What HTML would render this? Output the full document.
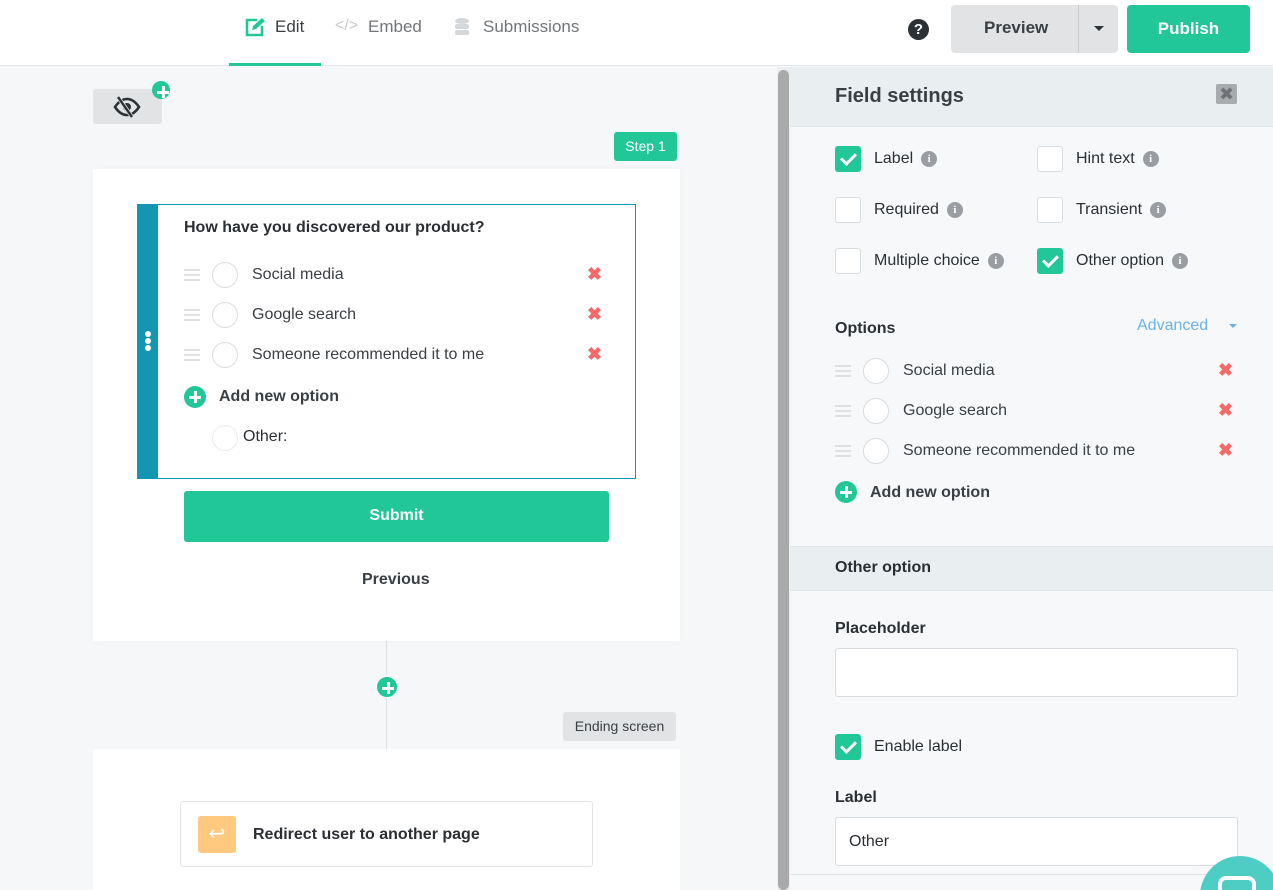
<!DOCTYPE html>
<html style="overflow:hidden;width:1273px;height:890px"><head><meta charset="utf-8"><style>
*{box-sizing:border-box;margin:0;padding:0}
body{width:1273px;height:890px;overflow:hidden;font-family:"Liberation Sans",sans-serif;color:#2b2f33;background:#f5f7f9;position:relative}
.a{position:absolute}
.t{font-size:16px;white-space:nowrap}
.b{font-weight:bold}
.cb{position:absolute;width:26px;height:26px;border:1px solid #d8dde1;border-radius:3px;background:#fff}
.cb.on{background:#22c797;border-color:#22c797}
.cb.on::after{content:"";position:absolute;left:8px;top:3px;width:6px;height:12px;border:solid #fff;border-width:0 3px 3px 0;transform:rotate(45deg)}
.info{display:inline-block;width:16px;height:16px;border-radius:50%;background:#9a9ea2;color:#fff;font-size:11px;font-weight:bold;text-align:center;line-height:16px;margin-left:8px;vertical-align:1px;font-family:"Liberation Serif",serif}
.rad{position:absolute;width:26px;height:26px;border-radius:50%;border:1px solid #d8dde1;background:#fff}
.drag{position:absolute;width:16px;height:12px;border-top:2px solid #dde1e4;border-bottom:2px solid #dde1e4}
.drag::after{content:"";position:absolute;left:0;right:0;top:3px;height:2px;background:#dde1e4}
.x{position:absolute;color:#f46a6a;font-size:18px;font-weight:bold}
.plus{position:absolute;width:22px;height:22px;border-radius:50%;background:#22c797}
.plus::before{content:"";position:absolute;left:5px;top:9.5px;width:12px;height:3px;background:#fff}
.plus::after{content:"";position:absolute;left:9.5px;top:5px;width:3px;height:12px;background:#fff}
</style></head><body>
<!-- header -->
<div class="a" style="left:0;top:0;width:1273px;height:66px;background:#fff;border-bottom:1px solid #e2e7ea"></div>
<div class="a" style="left:229px;top:63px;width:92px;height:3px;background:#22c797"></div>
<svg class="a" style="left:244px;top:17px" width="22" height="20" viewBox="0 0 22 20"><path d="M13 3H3v15h15V9" fill="none" stroke="#22c797" stroke-width="2.5"/><path d="M8 13l1-4 9-8 3 3-9 8z" fill="#22c797"/></svg>
<div class="a t" style="left:275px;top:17px;font-size:17px;color:#3a3f44">Edit</div>
<div class="a t" style="left:335px;top:17px;font-size:16px;color:#c7cacd">&lt;/&gt;</div>
<div class="a t" style="left:368px;top:17px;font-size:17px;color:#71767b">Embed</div>
<svg class="a" style="left:454px;top:17px" width="16" height="20" viewBox="0 0 16 20"><ellipse cx="8" cy="4" rx="7" ry="3" fill="#d5d8db"/><rect x="1" y="7" width="14" height="5" rx="2" fill="#d5d8db"/><rect x="1" y="13" width="14" height="5" rx="2" fill="#d5d8db"/></svg>
<div class="a t" style="left:483px;top:17px;font-size:17px;color:#71767b">Submissions</div>
<div class="a" style="left:908px;top:19px;width:21px;height:21px;border-radius:50%;background:#2b3135;color:#fff;font-weight:bold;font-size:15px;text-align:center;line-height:21px">?</div>
<div class="a" style="left:951px;top:5px;width:167px;height:48px;background:#e1e3e5;border-radius:4px"></div>
<div class="a" style="left:1078px;top:5px;width:1px;height:48px;background:#c9cccf"></div>
<div class="a t b" style="left:984px;top:18px;font-size:17px;color:#3a3f44">Preview</div>
<div class="a" style="left:1094px;top:26px;border:5px solid transparent;border-top-color:#2b3135;border-bottom:0"></div>
<div class="a" style="left:1127px;top:5px;width:123px;height:48px;background:#22c797;border-radius:4px;color:#fff;font-weight:bold;font-size:17px;text-align:center;line-height:47px">Publish</div>

<!-- canvas -->
<div class="a" style="left:93px;top:89px;width:69px;height:35px;background:#e1e3e5;border-radius:3px"></div>
<svg class="a" style="left:112px;top:94px" width="30" height="26" viewBox="0 0 30 26"><path d="M3 13c4-6 8-8 12-8s8 2 12 8c-4 6-8 8-12 8s-8-2-12-8z" fill="none" stroke="#2b3135" stroke-width="2.6"/><circle cx="15" cy="13" r="4" fill="#2b3135"/><path d="M6 3l14 20" stroke="#e1e3e5" stroke-width="4"/><path d="M6 3l14 20" stroke="#2b3135" stroke-width="2.4"/></svg>
<div class="plus" style="left:152px;top:81px;width:18px;height:18px"></div>
<div class="a" style="left:614px;top:132px;width:63px;height:29px;background:#22c797;border-radius:3px;color:#fff;font-size:14px;text-align:center;line-height:29px">Step 1</div>
<div class="a" style="left:93px;top:169px;width:587px;height:472px;background:#fff;box-shadow:0 0 8px rgba(0,0,0,.03)"></div>
<div class="a" style="left:137px;top:204px;width:499px;height:275px;border:1px solid #1396b1"></div>
<div class="a" style="left:137px;top:204px;width:21px;height:275px;background:#1396b1"></div>
<div class="a" style="left:145px;top:331px;width:6px;height:6px;border-radius:50%;background:#fff;box-shadow:0 7px 0 #fff,0 14px 0 #fff"></div>
<div class="a t b" style="left:184px;top:219px;font-size:16px">How have you discovered our product?</div>
<div class="drag" style="left:184px;top:269px"></div><div class="rad" style="left:212px;top:262px"></div><div class="a t" style="left:252px;top:266px;color:#3a3f44">Social media</div><div class="x" style="left:587px;top:264px">✖</div>
<div class="drag" style="left:184px;top:309px"></div><div class="rad" style="left:212px;top:302px"></div><div class="a t" style="left:252px;top:306px;color:#3a3f44">Google search</div><div class="x" style="left:587px;top:304px">✖</div>
<div class="drag" style="left:184px;top:349px"></div><div class="rad" style="left:212px;top:342px"></div><div class="a t" style="left:252px;top:346px;color:#3a3f44">Someone recommended it to me</div><div class="x" style="left:587px;top:344px">✖</div>
<div class="plus" style="left:184px;top:386px"></div><div class="a t b" style="left:219px;top:388px;color:#3a3f44">Add new option</div>
<div class="rad" style="left:212px;top:425px;border-color:#e8ebed"></div><div class="a t" style="left:243px;top:428px">Other:</div>
<div class="a" style="left:184px;top:491px;width:425px;height:51px;background:#22c797;border-radius:3px;color:#fff;font-weight:bold;font-size:16px;text-align:center;line-height:49px">Submit</div>
<div class="a t b" style="left:362px;top:571px;color:#3a3f44">Previous</div>
<div class="a" style="left:386px;top:641px;width:1px;height:108px;background:#dde1e4"></div>
<div class="plus" style="left:375px;top:675px;width:24px;height:24px;border:2px solid #f5f7f9"></div>
<div class="a" style="left:563px;top:712px;width:113px;height:29px;background:#e1e3e5;border-radius:3px;color:#3a3f44;font-size:14px;text-align:center;line-height:29px">Ending screen</div>
<div class="a" style="left:93px;top:749px;width:587px;height:141px;background:#fff"></div>
<div class="a" style="left:180px;top:801px;width:413px;height:66px;border:1px solid #e2e5e8;border-radius:3px"></div>
<div class="a" style="left:198px;top:816px;width:38px;height:37px;background:#ffca80;border-radius:3px;color:#fff;font-size:20px;text-align:center;line-height:37px">↩</div>
<div class="a t b" style="left:253px;top:826px">Redirect user to another page</div>

<!-- scrollbar -->
<div class="a" style="left:777px;top:67px;width:13px;height:823px;background:#eceef0"></div>
<div class="a" style="left:778px;top:70px;width:11px;height:820px;background:#a9a9a9;border-radius:6px"></div>

<!-- right panel -->
<div class="a" style="left:790px;top:67px;width:483px;height:823px;background:#f6f8fa"></div>
<div class="a" style="left:790px;top:67px;width:483px;height:60px;background:#e9eef1;border-bottom:1px solid #e0e5e8"></div>
<div class="a t b" style="left:835px;top:85px;font-size:20px;color:#3a3f44">Field settings</div>
<div class="a" style="left:1216px;top:84px;width:21px;height:20px;background:#a9acaf;border-radius:2px;color:#6f7377;font-size:18px;text-align:center;line-height:20px">✖</div>
<div class="cb on" style="left:835px;top:146px"></div><div class="a t" style="left:874px;top:150px">Label<span class="info">i</span></div>
<div class="cb" style="left:1037px;top:146px"></div><div class="a t" style="left:1076px;top:150px">Hint text<span class="info">i</span></div>
<div class="cb" style="left:835px;top:197px"></div><div class="a t" style="left:874px;top:201px">Required<span class="info">i</span></div>
<div class="cb" style="left:1037px;top:197px"></div><div class="a t" style="left:1076px;top:201px">Transient<span class="info">i</span></div>
<div class="cb" style="left:835px;top:248px"></div><div class="a t" style="left:874px;top:252px">Multiple choice<span class="info">i</span></div>
<div class="cb on" style="left:1037px;top:248px"></div><div class="a t" style="left:1076px;top:252px">Other option<span class="info">i</span></div>
<div class="a t b" style="left:835px;top:320px">Options</div>
<div class="a t" style="left:1137px;top:317px;color:#6cb2e4">Advanced</div>
<div class="a" style="left:1229px;top:324px;border:4px solid transparent;border-top-color:#6cb2e4;border-bottom:0"></div>
<div class="drag" style="left:835px;top:365px"></div><div class="rad" style="left:863px;top:358px"></div><div class="a t" style="left:903px;top:362px;color:#3a3f44">Social media</div><div class="x" style="left:1218px;top:360px">✖</div>
<div class="drag" style="left:835px;top:405px"></div><div class="rad" style="left:863px;top:398px"></div><div class="a t" style="left:903px;top:402px;color:#3a3f44">Google search</div><div class="x" style="left:1218px;top:400px">✖</div>
<div class="drag" style="left:835px;top:445px"></div><div class="rad" style="left:863px;top:438px"></div><div class="a t" style="left:903px;top:442px;color:#3a3f44">Someone recommended it to me</div><div class="x" style="left:1218px;top:440px">✖</div>
<div class="plus" style="left:835px;top:481px"></div><div class="a t b" style="left:870px;top:484px;color:#3a3f44">Add new option</div>
<div class="a" style="left:790px;top:546px;width:483px;height:45px;background:#e9eef1;border-top:1px solid #e0e5e8;border-bottom:1px solid #e0e5e8"></div>
<div class="a t b" style="left:835px;top:559px">Other option</div>
<div class="a t b" style="left:835px;top:620px">Placeholder</div>
<div class="a" style="left:835px;top:648px;width:403px;height:49px;background:#fff;border:1px solid #d8dde1;border-radius:3px"></div>
<div class="cb on" style="left:835px;top:734px"></div><div class="a t" style="left:874px;top:738px">Enable label</div>
<div class="a t b" style="left:835px;top:789px">Label</div>
<div class="a" style="left:835px;top:817px;width:403px;height:49px;background:#fff;border:1px solid #d8dde1;border-radius:3px"></div>
<div class="a t" style="left:849px;top:833px">Other</div>
<div class="a" style="left:790px;top:874px;width:483px;height:1px;background:#e0e5e8"></div>
<div class="a" style="left:1200px;top:856px;width:73px;height:34px;overflow:hidden"><div style="position:absolute;left:0;top:0;width:80px;height:80px;border-radius:50%;background:#4ecdc4"></div><div style="position:absolute;left:18px;top:20px;width:38px;height:24px;border:4px solid #fff;border-radius:8px"></div></div>
</body></html>
